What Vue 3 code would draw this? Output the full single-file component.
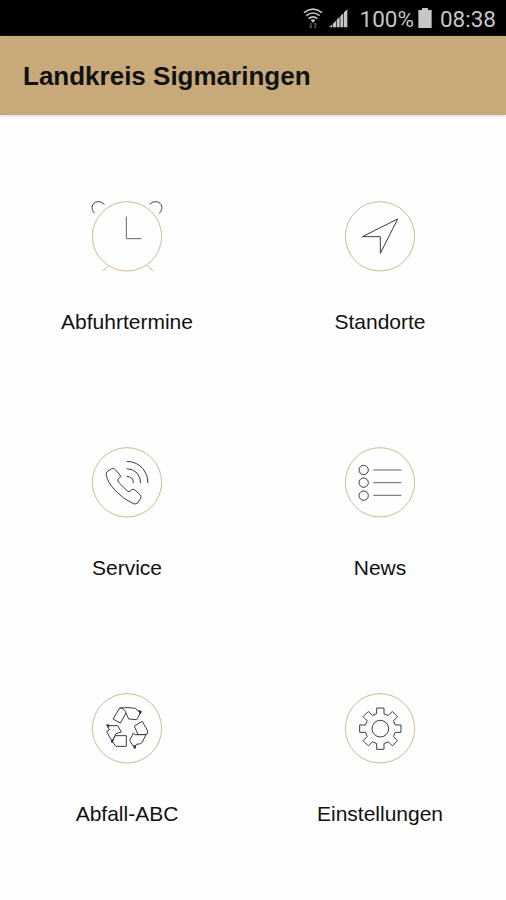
<template>
  <div class="screen">
    <div class="status-bar">
      <svg class="wifi" viewBox="0 0 60 66">
        <path d="M3 14Q30 -7 57 14M10 23Q30 7 50 23M17 32Q30 21 43 32" />
        <path class="fill" d="M23 37Q30 31 37 37L30 44Z" />
        <path class="arrows" d="M24 44v16m-5 -5l5 6M36 61v-16m5 5l-5 -6" />
      </svg>
      <svg class="signal" viewBox="0 0 57 57">
        <path d="M0 55L10 46V55ZM12 55V44L21 35V55ZM23 55V32L32 24V55ZM34 55V21L43 13V55ZM45 55V10L55 1V55Z" />
      </svg>
      <span class="percent">100%</span>
      <svg class="battery" viewBox="0 0 42 60">
        <path d="M12 0H30V6H41V60H1V6H12Z" />
      </svg>
      <span class="time">08:38</span>
    </div>

    <header class="header">
      <h1>Landkreis Sigmaringen</h1>
    </header>

    <main class="menu">
      <a v-for="item in items" :key="item.icon" class="item">
        <svg class="icon" viewBox="21 21 240 240">
          <circle class="ring" cx="141" cy="139" r="104" />
          <g v-if="item.icon === 'clock'">
            <path class="ring" d="M86 226L68 243M200 226L220 243" />
            <path class="soft" d="M139 80V146H185" />
            <path d="M44 70C30 55 36 38 52 35Q64 33 73 43M238 70C252 55 246 38 230 35Q218 33 209 43" />
          </g>
          <path v-else-if="item.icon === 'arrow'" d="M194 87L88 140H142V190Z" />
          <g v-else-if="item.icon === 'phone'">
            <path d="M81 107L95 98Q101 95 106 101L120 117Q123 121 119 125L114 130Q112 134 116 139L142 165Q147 169 151 165L156 161Q160 158 165 162L181 177Q185 181 182 187L174 200Q168 206 160 203Q130 190 105 163Q82 137 79 118Q78 111 81 107Z" />
            <path d="M140 76Q171 77 190 99Q204 117 204 141M140 98Q159 99 171 111Q182 124 182 141M140 121Q160 122 160 141" />
          </g>
          <g v-else-if="item.icon === 'list'">
            <circle v-for="y in [102, 140, 179]" :key="y" cx="92" :cy="y" r="14" />
            <path class="soft" d="M121 102H205M121 140H205M121 178H205" />
          </g>
          <g v-else-if="item.icon === 'recycle'">
            <path d="M119 78L99 111L121 123L138 93M119 78Q133 78 138 93L146 111L170 113L182 91L175 88L167 79Q145 75 119 78" />
            <path d="M82 131H113L124 150L108 155L96 178L80 149L88 144ZM106 161H139V193H108L96 178Z" />
            <path d="M187 118L203 147Q205 158 198 157L174 158L163 132ZM198 157L187 181Q183 187 169 187L164 198L149 176L160 153L165 158H198" />
            <path class="dot" d="M176 86l8 2l-3 8zM80 128l9 2l-5 6zM160 192l7 -1l-2 9zM94 174l6 1l-4 8z" />
          </g>
          <g v-else>
            <path :d="gear" />
            <circle cx="142" cy="140" r="25" />
          </g>
        </svg>
        <span class="label">{{ item.label }}</span>
      </a>
    </main>
  </div>
</template>

<script setup>
const items = [
  { icon: 'clock', label: 'Abfuhrtermine' },
  { icon: 'arrow', label: 'Standorte' },
  { icon: 'phone', label: 'Service' },
  { icon: 'list', label: 'News' },
  { icon: 'recycle', label: 'Abfall-ABC' },
  { icon: 'gear', label: 'Einstellungen' }
]

// eight teeth, four corners each: [angle offset, radius]
const tooth = [[-14, 46], [-10, 63], [10, 63], [14, 46]]
const points = []
for (let i = 0; i < 8; i++) {
  for (const [offset, r] of tooth) {
    const a = (i * 45 + offset) * Math.PI / 180
    points.push(`${(142 + r * Math.sin(a)).toFixed(1)} ${(140 - r * Math.cos(a)).toFixed(1)}`)
  }
}
const gear = `M${points.join('L')}Z`
</script>

<style>
body {
  margin: 0;
  background: #fefefe;
}
</style>

<style scoped>
.screen {
  display: flex;
  flex-direction: column;
  height: 900px;
  overflow: hidden;
  font-family: 'Liberation Sans', Arial, sans-serif;
  color: #111;
}
.status-bar {
  display: flex;
  flex-shrink: 0;
  align-items: center;
  justify-content: flex-end;
  box-sizing: border-box;
  height: 36px;
  padding: 1px 11px 0 0;
  background: #000;
  color: #c6c6c6;
  font-family: Roboto, sans-serif;
  font-size: 22.5px;
}
.status-bar svg {
  fill: #c6c6c6;
}
.wifi {
  width: 20px;
  height: 22px;
  margin-right: 6px;
}
.wifi path {
  fill: none;
  stroke: #c6c6c6;
  stroke-width: 5;
}
.wifi .fill {
  fill: #c6c6c6;
  stroke: none;
}
.wifi .arrows {
  stroke: #777;
  stroke-width: 3;
}
.signal {
  width: 19px;
  height: 19px;
  margin-right: 12px;
}
.percent {
  margin-right: 4px;
}
.battery {
  width: 14px;
  height: 20px;
  margin: 0 8px 1px 0;
}
.time {
  margin-right: -1px;
}
.header {
  display: flex;
  flex-shrink: 0;
  align-items: center;
  height: 79px;
  padding-left: 23px;
  background: #c8aa7a;
  box-shadow: 0 1px 2px #d8d8e4;
}
.header h1 {
  margin: 0;
  font-size: 26px;
  line-height: 30px;
}
.menu {
  display: grid;
  flex-shrink: 0;
  grid-template-columns: 1fr 1fr;
  grid-auto-rows: 246px;
  padding-top: 82px;
}
.item {
  display: flex;
  flex-direction: column;
  align-items: center;
}
.icon {
  width: 80px;
  height: 80px;
  fill: none;
  stroke: #3d3d42;
  stroke-width: 3;
}
.icon .ring {
  stroke: #d3b98f;
}
.icon .soft {
  stroke: #66666a;
}
.icon .dot {
  fill: #222;
}
.label {
  margin-top: 33px;
  padding-left: 1px;
  font-size: 21px;
  line-height: 24px;
}
</style>
